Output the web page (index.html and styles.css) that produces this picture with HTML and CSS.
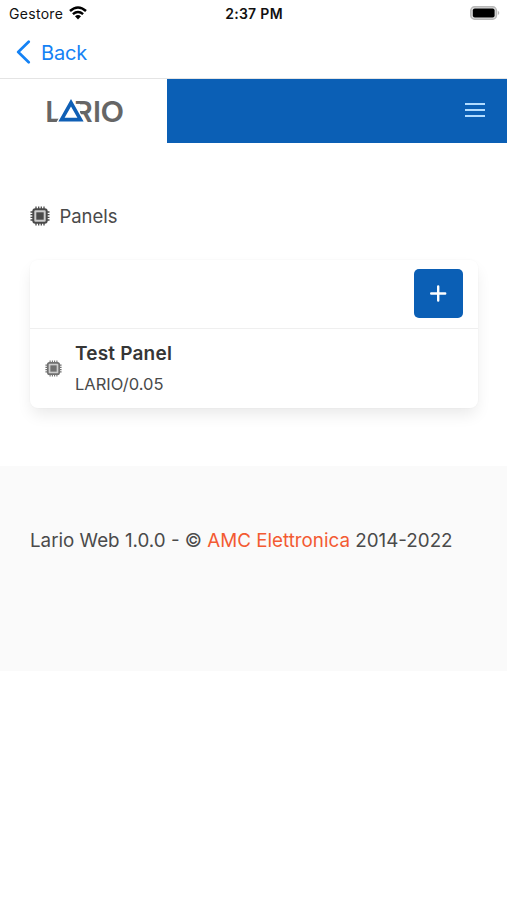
FILE: index.html
```html
<!DOCTYPE html>
<html lang="en">
<head>
<meta charset="utf-8">
<meta name="viewport" content="width=device-width, initial-scale=1">
<title>Lario Web</title>
<link rel="stylesheet" href="styles.css">
</head>
<body>
<svg width="0" height="0" class="defs">
  <symbol id="chip" viewBox="0 0 20 20">
    <path d="M6 .5v19M8.7 .5v19M11.3 .5v19M14 .5v19M.5 6h19M.5 8.7h19M.5 11.3h19M.5 14h19" stroke="currentColor" stroke-width="1.3"/>
    <rect x="3.3" y="3.3" width="13.4" height="13.4" rx="2" fill="#ccc" stroke="currentColor" stroke-width="2"/>
    <rect x="6.3" y="6.3" width="7.4" height="7.4" fill="currentColor"/>
  </symbol>
</svg>
<div class="status">
  <div class="carrier"><span>Gestore</span>
    <svg width="18" height="14" viewBox="0 0 18 14" fill="none" stroke="#000" stroke-width="2.5"><path d="M1 5Q9-2 17 5M3.9 8.1Q9 3.8 14.1 8.1"/><path d="M6 10.3Q9 7.9 12 10.3L9 13.4Z" fill="#000" stroke="none"/></svg>
  </div>
  <span class="time">2:37 PM</span>
  <svg class="battery" width="30" height="14" viewBox="0 0 30 14"><rect x=".8" y=".8" width="25.6" height="12.4" rx="3.8" fill="#ddd" stroke="#b8b8b8" stroke-width="1.5"/><rect x="2.8" y="2.6" width="21.8" height="8.8" rx="2" fill="#000"/><path d="M27.8 4.8q3 2.2 0 4.4z" fill="#b8b8b8"/></svg>
</div>
<nav class="back">
  <svg width="15" height="24" viewBox="0 0 15 24" fill="none" stroke="#1482f5" stroke-width="2.7" stroke-linecap="round" stroke-linejoin="round"><path d="M12.7 1.8L2.2 12l10.5 10.2"/></svg>
  <span>Back</span>
</nav>
<header class="top">
  <div class="brand">
    <svg width="90" height="46" viewBox="0 0 90 46">
      <g class="wordmark"><text x=".2" y="33.5">L</text><text x="28.8" y="33.5">R</text><text x="48.1" y="33.5">I</text><text x="55.6" y="33.5" textLength="23.6" lengthAdjust="spacingAndGlyphs">O</text></g>
      <path d="M28 15.9h7v18H28z" fill="#fff"/>
      <path d="M26 11L38.6 33.5H13.4Z" fill="#fff" stroke="#fff" stroke-width="2.6"/>
      <path d="M26 11L38.6 33.5H13.4ZM26 18.4L19.6 29.8H32.4Z" fill="#0f5fb5" fill-rule="evenodd"/>
    </svg>
  </div>
  <div class="bar"><div class="burger"><i></i><i></i><i></i></div></div>
</header>
<main>
  <h1><svg width="20" height="20"><use href="#chip"/></svg><span>Panels</span></h1>
  <section class="card">
    <div class="tools"><button aria-label="Add"><svg width="17" height="17" viewBox="0 0 17 17" stroke="#fff" stroke-width="2.4" stroke-linecap="round"><path d="M8.2 1.5v14M1.2 8.5h14"/></svg></button></div>
    <div class="panel">
      <svg width="17" height="17"><use href="#chip"/></svg>
      <div><div class="name">Test Panel</div><div class="model">LARIO/0.05</div></div>
    </div>
  </section>
</main>
<footer>Lario Web 1.0.0 - © <a>AMC Elettronica</a> 2014-2022</footer>
</body>
</html>
```
FILE: styles.css
```css
* { box-sizing: border-box; }
body { margin: 0; background: #fff; color: #4a4a4a; font-family: Inter, "Liberation Sans", sans-serif; }
svg { display: block; flex: none; }
.defs { position: absolute; }
.status { height: 28px; display: grid; grid-template-columns: 1fr auto 1fr; align-items: center; padding: 0 7px 0 9px; color: #111; font-size: 14px; line-height: 28px; }
.carrier { display: flex; gap: 6px; align-items: center; letter-spacing: .3px; }
.carrier svg { margin-top: -2px; }
.time { font-weight: 600; letter-spacing: .3px; margin-right: 1px; }
.battery { justify-self: end; margin-top: -2px; }
.back { height: 51px; display: flex; align-items: center; gap: 9px; padding: 0 17px 2px 16px; color: #1482f5; font-size: 20px; border-bottom: 1px solid #e4e4e4; }
.back span { margin: 1px 0 0 1px; letter-spacing: -.15px; }
.top { height: 64px; display: flex; }
.brand { width: 167px; display: flex; padding: 9px 0 0 45px; }
.wordmark { font: 600 29px Inter, sans-serif; fill: #666; }
.bar { flex: 1; background: #0b5fb5; display: flex; justify-content: flex-end; padding: 24px 22px 0 0; }
.burger { width: 20px; display: flex; flex-direction: column; gap: 4.5px; }
.burger i { height: 1.5px; background: #b2dcff; }
main { height: 323px; padding: 60px 29px 0 30px; }
h1 { display: flex; align-items: center; gap: 10px; height: 25px; margin: 0; font-size: 18.5px; font-weight: 400; }
h1 span { letter-spacing: -.05px; margin-left: -.5px; }
.card { margin-top: 32px; height: 148px; border-radius: 8px; background: #fff; box-shadow: 0 8px 16px -2px rgba(10,10,10,.09), 0 0 0 1px rgba(10,10,10,.01); }
.tools { height: 69px; display: flex; justify-content: flex-end; padding: 9px 15px 0 0; border-bottom: 1px solid #efefef; }
button { width: 49px; height: 49px; padding: 0; border: 0; border-radius: 5px; background: #0b5fb5; display: grid; place-items: center; }
.panel { height: 79px; display: flex; align-items: center; gap: 13px; padding-left: 15px; }
.panel > svg { color: #707070; }
.name { color: #363636; font-size: 19px; line-height: 30px; font-weight: 600; padding-top: 1px; letter-spacing: .2px; }
.model { font-size: 16.5px; line-height: 30px; }
footer { height: 205px; padding: 61px 30px 0; background: #fafafa; font-size: 18.8px; line-height: 28px; white-space: nowrap; }
footer a { color: #f35a32; }
```
